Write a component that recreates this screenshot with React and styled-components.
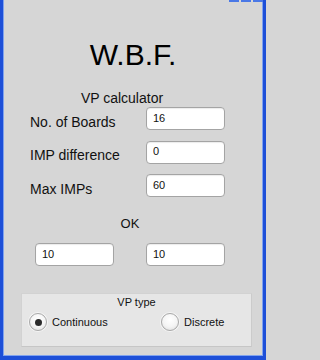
import React from "react"
import styled, { createGlobalStyle } from "styled-components"

const GlobalStyle = createGlobalStyle`
  html, body {
    margin: 0;
    padding: 0;
    background: #d6d6d6;
  }
  body {
    font-family: "Liberation Sans", Arial, sans-serif;
  }
`

const Window = styled.div`
  box-sizing: border-box;
  width: 266px;
  height: 360px;
  display: flex;
  flex-direction: column;
  background: #d6d6d6;
  border-left: 3px solid #1d4fd8;
  border-right: 3px solid #1d4fd8;
  border-bottom: 4px solid #1d4fd8;
  box-shadow: inset 1px 0 0 #7fa2ee, inset -1px 0 0 #7fa2ee, inset 0 -1px 0 #7fa2ee;
`

const TitleEdge = styled.div`
  height: 2px;
  display: flex;
  justify-content: flex-end;
  gap: 2px;
`

const EdgeButton = styled.span`
  width: ${p => p.$w}px;
  height: 2px;
  background: #4a78e6;
`

const Title = styled.h1`
  margin: 36px 0 0;
  font-size: 30px;
  line-height: 34px;
  font-weight: normal;
  text-align: center;
  color: #000;
`

const Subtitle = styled.div`
  margin-top: 18px;
  padding-right: 22px;
  font-size: 14px;
  line-height: 16px;
  text-align: center;
  color: #111;
`

const Form = styled.div`
  margin: 1px 0 0 27px;
  display: grid;
  grid-template-columns: 116px 79px;
  row-gap: 10.5px;
  align-items: center;
`

const Label = styled.label`
  font-size: 14px;
  line-height: 16px;
  padding-top: 6px;
  color: #111;
`

const Field = styled.input`
  box-sizing: border-box;
  width: 79px;
  height: 23px;
  margin: 0;
  padding: 0 0 2px 6px;
  border: 1px solid #a4a4a4;
  border-radius: 4px;
  background: #fff;
  box-shadow: inset 0 1px 1px rgba(0, 0, 0, 0.08);
  font-family: "Liberation Sans", Arial, sans-serif;
  font-size: 11px;
  color: #111;
  outline: none;
`

const OkLabel = styled.div`
  margin-top: 19px;
  padding-right: 6px;
  font-size: 13px;
  line-height: 16px;
  text-align: center;
  color: #111;
`

const ResultRow = styled.div`
  margin: 11px 0 0 32px;
  display: flex;
  gap: 32px;
`

const Group = styled.fieldset`
  box-sizing: border-box;
  width: 231px;
  height: 54px;
  margin: 27px 0 0 18px;
  padding: 2px 7px 0;
  border: 1px solid #d2d2d2;
  border-right-color: #cbcbcb;
  border-bottom-color: #c6c6c6;
  background: #e6e6e6;
  display: flex;
  flex-direction: column;
`

const Legend = styled.div`
  font-size: 11px;
  line-height: 13px;
  text-align: center;
  color: #111;
`

const RadioRow = styled.div`
  margin-top: 4px;
  display: grid;
  grid-template-columns: 132px auto;
  align-items: center;
`

const Option = styled.label`
  display: flex;
  align-items: center;
  gap: 5px;
  font-size: 11px;
  color: #111;
`

const Dot = styled.span`
  box-sizing: border-box;
  width: 18px;
  height: 18px;
  border-radius: 50%;
  border: 1px solid #a9a9a9;
  background: radial-gradient(circle at 50% 35%, #ffffff 0%, #f4f4f4 55%, #dadada 100%);
  box-shadow: 0 0 0 1px rgba(255, 255, 255, 0.6);
  display: flex;
  align-items: center;
  justify-content: center;

  &::after {
    content: "";
    width: 7px;
    height: 7px;
    border-radius: 50%;
    background: #2b2b2b;
    display: ${p => (p.$checked ? "block" : "none")};
  }
`

const Radio = ({ checked, children }) => (
  <Option>
    <Dot $checked={checked} />
    {children}
  </Option>
)

const rows = [
  { label: "No. of Boards", value: "16" },
  { label: "IMP difference", value: "0" },
  { label: "Max IMPs", value: "60" },
]

export default function App() {
  return (
    <>
      <GlobalStyle />
      <Window>
        <TitleEdge>
          <EdgeButton $w={10} />
          <EdgeButton $w={10} />
          <EdgeButton $w={10} />
        </TitleEdge>
        <Title>W.B.F.</Title>
        <Subtitle>VP calculator</Subtitle>
        <Form>
          {rows.map(r => (
            <React.Fragment key={r.label}>
              <Label>{r.label}</Label>
              <Field defaultValue={r.value} />
            </React.Fragment>
          ))}
        </Form>
        <OkLabel>OK</OkLabel>
        <ResultRow>
          <Field defaultValue="10" />
          <Field defaultValue="10" />
        </ResultRow>
        <Group>
          <Legend>VP type</Legend>
          <RadioRow>
            <Radio checked>Continuous</Radio>
            <Radio>Discrete</Radio>
          </RadioRow>
        </Group>
      </Window>
    </>
  )
}
